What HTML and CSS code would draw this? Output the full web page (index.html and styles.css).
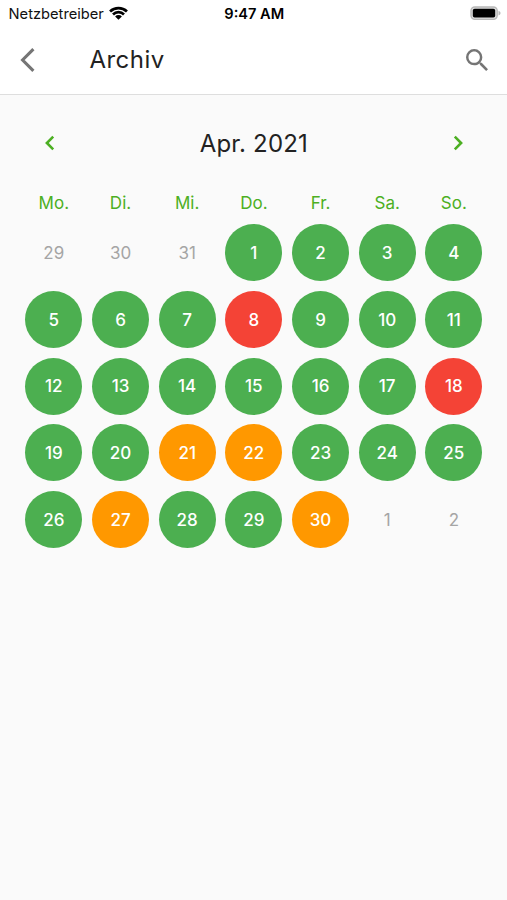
FILE: index.html
```html
<!DOCTYPE html>
<html lang="de">
<head>
<meta charset="utf-8">
<title>Archiv</title>
<link rel="stylesheet" href="styles.css">
</head>
<body>
<header class="top">
  <div class="status">
    <div class="carrier"><span>Netzbetreiber</span>
      <svg class="wifi" viewBox="0 0 18 14" width="19" height="14" preserveAspectRatio="none"><path d="M0.1 4.5A12.6 12.6 0 0 1 17.9 4.5L16.1 6.4A10.1 10.1 0 0 0 1.9 6.4Z"/><path d="M2.9 7.5A8.4 8.4 0 0 1 15.1 7.5L13.3 9.4A6 6 0 0 0 4.7 9.4Z"/><path d="M5.8 10.5A4.3 4.3 0 0 1 12.2 10.5L9 13.7Z"/></svg>
    </div>
    <div class="time">9:47 AM</div>
    <svg class="battery" viewBox="0 0 31 15" width="31" height="15"><rect x="1" y="1" width="26.2" height="12.4" rx="3.8" fill="#ddd" stroke="#b8b8b8" stroke-width="1.4"/><rect x="2.8" y="2.7" width="22.4" height="8.8" rx="1.8"/><path d="M28.5 4.7Q30.6 5.4 30.6 7.1T28.5 9.5Z" fill="#b8b8b8"/></svg>
  </div>
  <div class="bar">
    <svg class="back" viewBox="0 0 16 24" width="16" height="24"><path d="M13.4 1.2L2.6 12L13.4 22.8"/></svg>
    <h1>Archiv</h1>
    <svg class="search" viewBox="3 3 17.49 17.49" width="22" height="22"><path d="M15.5 14h-.79l-.28-.27A6.47 6.47 0 0 0 16 9.5 6.5 6.5 0 1 0 9.5 16c1.61 0 3.09-.59 4.23-1.57l.27.28v.79l5 4.99L20.49 19l-4.99-5zm-6 0C7.01 14 5 11.99 5 9.5S7.01 5 9.5 5 14 7.01 14 9.5 11.99 14 9.5 14z"/></svg>
  </div>
</header>
<main>
  <div class="month">
    <svg class="arrow" viewBox="0 0 10 16" width="10" height="16"><path d="M8.2 1.7L1.9 8L8.2 14.3"/></svg>
    <h2>Apr. 2021</h2>
    <svg class="arrow" viewBox="0 0 10 16" width="10" height="16"><path d="M1.8 1.7L8.1 8L1.8 14.3"/></svg>
  </div>
  <div class="week names"><span>Mo.</span><span>Di.</span><span>Mi.</span><span>Do.</span><span>Fr.</span><span>Sa.</span><span>So.</span></div>
  <div class="week days">
    <span class="out">29</span><span class="out">30</span><span class="out">31</span><span>1</span><span>2</span><span>3</span><span>4</span>
    <span>5</span><span>6</span><span>7</span><span class="red">8</span><span>9</span><span>10</span><span>11</span>
    <span>12</span><span>13</span><span>14</span><span>15</span><span>16</span><span>17</span><span class="red">18</span>
    <span>19</span><span>20</span><span class="orange">21</span><span class="orange">22</span><span>23</span><span>24</span><span>25</span>
    <span>26</span><span class="orange">27</span><span>28</span><span>29</span><span class="orange">30</span><span class="out">1</span><span class="out">2</span>
  </div>
</main>
</body>
</html>
```
FILE: styles.css
```css
* { box-sizing: border-box; }
body {
  margin: 0;
  min-height: 900px;
  background: #fafafa;
  font-family: Inter, "Liberation Sans", sans-serif;
  color: #222;
}
svg { display: block; flex: none; }
h1, h2 { margin: 0; font-weight: 400; }
.top { height: 95px; background: #fff; border-bottom: 1px solid #dedede; }
.status {
  display: grid;
  grid-template-columns: 1fr auto 1fr;
  align-items: center;
  height: 27px;
  padding: 0 6px 0 8.5px;
  color: #111;
}
.carrier { display: flex; align-items: center; gap: 5px; font-size: 14.7px; }
.wifi { margin-top: -2px; }
.time { font-size: 14.6px; font-weight: 600; color: #000; margin-left: -1px; }
.battery { justify-self: end; }
.bar { display: flex; align-items: center; height: 65px; padding: 0 19px 0 20px; }
.back { fill: none; stroke: #757575; stroke-width: 3.1; }
.bar h1 { flex: 1; margin-left: 53.5px; font-size: 24px; letter-spacing: 0.45px; }
.search { fill: #757575; }
main { padding: 0 19.8px 0 20.5px; }
.month { display: flex; justify-content: space-between; align-items: center; height: 96px; padding: 0 24px; }
.month h2 { font-size: 24px; letter-spacing: 0.2px; }
.arrow { fill: none; stroke: #4caf22; stroke-width: 2.6; }
.week { display: grid; grid-template-columns: repeat(7, 1fr); justify-items: center; font-size: 17px; }
.names { height: 28.5px; line-height: 24px; color: #4caf22; }
.days { grid-auto-rows: 66.7px; align-items: center; }
.days span {
  display: flex;
  align-items: center;
  justify-content: center;
  width: 57px;
  height: 57px;
  border-radius: 50%;
  background: #4caf50;
  color: #fff;
  font-weight: 500;
}
.days .red { background: #f44336; }
.days .orange { background: #ff9800; }
.days .out { background: none; color: #a5a5a5; font-weight: 400; }
```
